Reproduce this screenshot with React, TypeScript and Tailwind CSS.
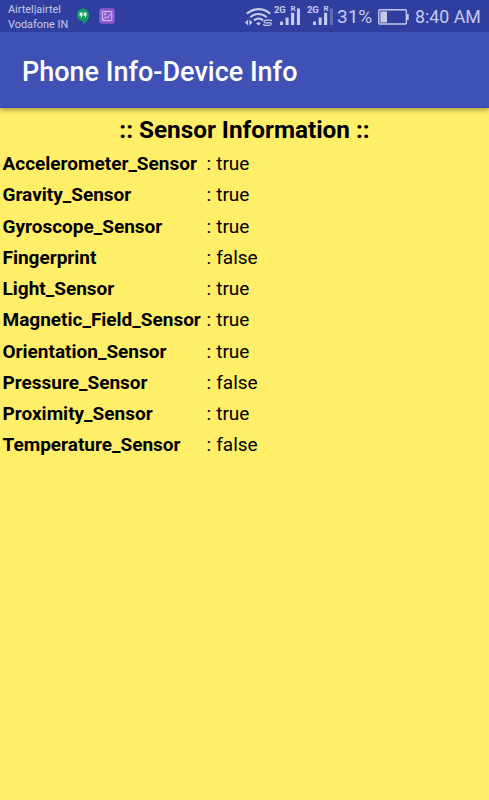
const sensors: [string, boolean][] = [
  ['Accelerometer_Sensor', true],
  ['Gravity_Sensor', true],
  ['Gyroscope_Sensor', true],
  ['Fingerprint', false],
  ['Light_Sensor', true],
  ['Magnetic_Field_Sensor', true],
  ['Orientation_Sensor', true],
  ['Pressure_Sensor', false],
  ['Proximity_Sensor', true],
  ['Temperature_Sensor', false],
];

function HangoutsIcon() {
  return (
    <svg className="ml-[7px] h-4 w-[14px] shrink-0" viewBox="0 0 14 16">
      <path d="M7 .5a6.3 6.3 0 0 0 0 12.7V16c3.5-1.7 6.3-5 6.3-9.2A6.3 6.3 0 0 0 7 .5Z" fill="#109b62" />
      <path d="M3.5 4.4h3v3.2L5.6 9.5H4.5l.7-1.8H3.5ZM7.6 4.4h3v3.2L9.7 9.5H8.6l.7-1.8H7.6Z" fill="#e5efee" />
    </svg>
  );
}

function PictureIcon() {
  return (
    <svg className="ml-[9px] h-4 w-4 shrink-0" viewBox="0 0 16 16">
      <rect x=".3" y=".3" width="15.4" height="15.4" rx="3" fill="#8e5bd0" />
      <g fill="none" stroke="#d3c0ef" strokeWidth="1">
        <rect x="3.3" y="3.5" width="9.4" height="9" rx=".7" />
        <path d="m3.8 12 2.8-3.3 1.6 1.2 4.2-4.3" />
        <circle cx="6" cy="6" r=".8" />
      </g>
    </svg>
  );
}

function WifiIcon() {
  return (
    <svg className="h-5 w-7 shrink-0" viewBox="0 0 28 20">
      <g fill="none" stroke="#c5cae9" strokeWidth="2.1">
        <path d="M1.8 6.8c6.6-6.2 16.8-6.2 23.4 0" />
        <path d="M5.3 10.3c4.6-4.5 11.8-4.5 16.4 0" />
        <path d="M8.9 13.6c2.7-2.6 6.5-2.6 9.2 0" />
      </g>
      <path d="m13.5 18.6-2.3-2.4c1.4-1.2 3.2-1.2 4.6 0ZM0 15.5l3.1-3.1v6.2ZM4.4 12.4l3.1 3.1-3.1 3.1Z" fill="#c5cae9" />
      <path d="M19.7 12.2h6.8l1 1.5-1 4.1-1.5 1.2h-6.5l-.8-1.5.7-3.4Z" fill="#303f9f" />
      <path
        d="M26.8 14.2c-.3-.8-1-1-2-1h-3c-3.2 0-3.6 2.6-1.2 2.6h4M18.4 17.3c.3.9 1 1.1 2 1.1h3c3.3 0 3.7-2.6 1.2-2.6h-4"
        fill="none"
        stroke="#c5cae9"
        strokeWidth="1.3"
      />
    </svg>
  );
}

function Signal({ weak = false }: { weak?: boolean }) {
  return (
    <svg className="h-[22px] w-7 shrink-0" viewBox="0 0 28 22">
      <g fill="#c5cae9" fontFamily="Roboto, sans-serif" fontWeight="700">
        <text x="0" y="8.2" fontSize="9.5" textLength="11.7">2G</text>
        <text x="16.5" y="6.4" fontSize="8">R</text>
        <path d="M6 16.5h3V20H6ZM11.6 12.5h3V20h-3ZM17 7.8h3.2V20H17Z" />
        <path d="M22.9 3.5h3.1V20h-3.1Z" opacity={weak ? 0.32 : 1} />
      </g>
    </svg>
  );
}

function BatteryIcon() {
  return (
    <svg className="ml-[5px] h-4 w-[31px] shrink-0" viewBox="0 0 31 16">
      <rect x=".8" y=".8" width="27.6" height="14.2" rx="1.2" fill="none" stroke="#c5cae9" strokeWidth="1.4" />
      <path d="M2.4 2.4H9v11H2.4ZM29 5h1.7v6H29Z" fill="#c5cae9" />
    </svg>
  );
}

export default function App() {
  return (
    <div className="flex h-[800px] w-[489px] flex-col overflow-hidden bg-[#ffee68] font-[Roboto,sans-serif]">
      <header className="z-10 shrink-0 shadow-[0_2px_5px_rgba(0,0,0,0.35)]">
        <div className="flex h-[32px] items-center bg-[#303f9f] pl-2 text-[#c5cae9]">
          <div className="w-[61px] shrink-0 pt-px text-[10.9px] leading-[15px] whitespace-nowrap">
            <div>Airtel|airtel</div>
            <div>Vodafone IN</div>
          </div>
          <HangoutsIcon />
          <PictureIcon />
          <div className="ml-[130px] flex shrink-0 items-center pt-px">
            <WifiIcon />
            <div className="ml-px flex gap-[5px] pb-[2px]">
              <Signal />
              <Signal weak />
            </div>
            <span className="ml-[2px] w-[36px] text-[19px] leading-6 whitespace-nowrap">31%</span>
            <BatteryIcon />
            <span className="ml-[6px] text-[17.8px] leading-6 whitespace-nowrap">8:40 AM</span>
          </div>
        </div>
        <div className="flex h-[76px] items-center border-b border-[#3949ab] bg-[#3f51b5] pt-[5px] pl-[22px]">
          <h1 className="text-[27px] leading-8 font-medium whitespace-nowrap text-white">Phone Info-Device Info</h1>
        </div>
      </header>
      <main className="text-black">
        <h2 className="pt-[7px] text-center text-[24.3px] leading-[29px] font-bold">:: Sensor Information ::</h2>
        <dl className="pt-1 pl-[2.5px] text-[19px] leading-[31.25px]">
          {sensors.map(([name, available]) => (
            <div key={name} className="flex h-[31.25px] whitespace-nowrap">
              <dt className="w-[204px] font-bold">{name}</dt>
              <dd className="[word-spacing:0.4px]">: {String(available)}</dd>
            </div>
          ))}
        </dl>
      </main>
    </div>
  );
}
